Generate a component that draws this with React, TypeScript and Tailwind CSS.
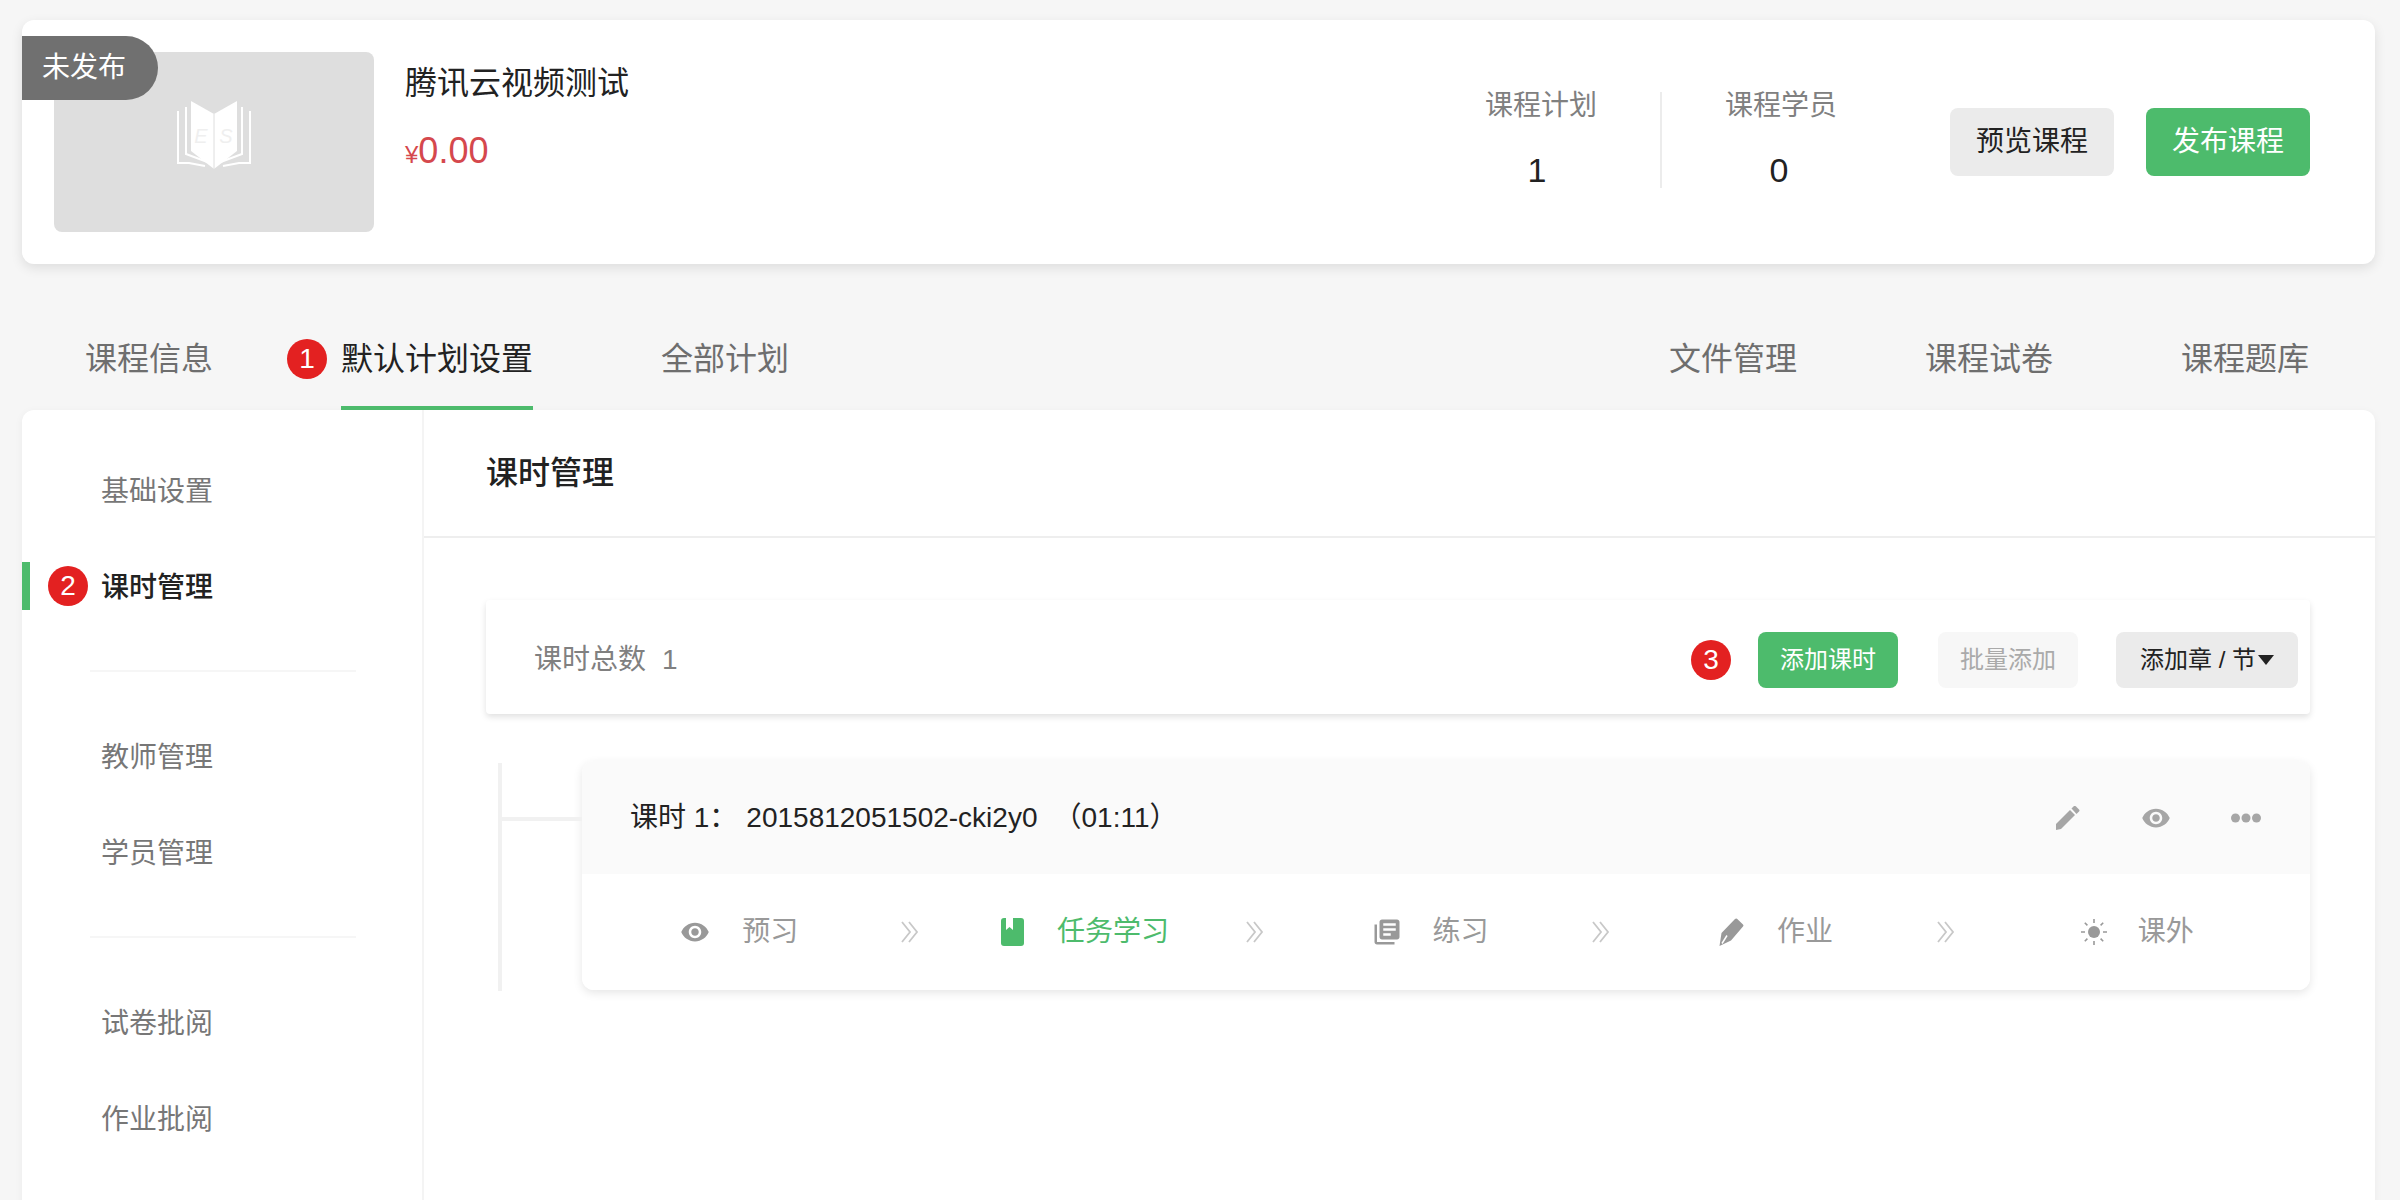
const FONT = "font-['Liberation_Sans','Noto_Sans_CJK_SC',sans-serif]";

function NumberBadge({ value }: { value: number }) {
	return (
		<span className="flex h-10 w-10 shrink-0 items-center justify-center rounded-full bg-[#e32121] text-[28px] leading-none text-white">
			{value}
		</span>
	);
}

function CoverBook() {
	return (
		<svg viewBox="0 0 74 68" className="h-[68px] w-[74px]" fill="none">
			<path d="M37 13 L14 0 V50 L37 68 Z" fill="#fff" />
			<path d="M37 13 L60 0 V50 L37 68 Z" fill="#fff" />
			<path d="M37 13 V68" stroke="#dedede" strokeWidth="1" />
			<path d="M9 6 V53 L33 62" stroke="#fff" strokeWidth="2" />
			<path d="M65 6 V53 L41 62" stroke="#fff" strokeWidth="2" />
			<path d="M1 10 V62 H12 L28 65" stroke="#fff" strokeWidth="2" />
			<path d="M73 10 V62 H62 L46 65" stroke="#fff" strokeWidth="2" />
			<text x="24" y="42" fontSize="20" fill="#efefef" textAnchor="middle" fontStyle="italic">E</text>
			<text x="49" y="42" fontSize="20" fill="#efefef" textAnchor="middle" fontStyle="italic">S</text>
		</svg>
	);
}

function EyeIcon({ className }: { className: string }) {
	return (
		<svg viewBox="0 0 24 24" className={className} fill="currentColor">
			<path d="M12 4.5C7 4.5 2.73 7.61 1 12c1.73 4.39 6 7.5 11 7.5s9.27-3.11 11-7.5c-1.73-4.39-6-7.5-11-7.5zM12 17c-2.76 0-5-2.24-5-5s2.24-5 5-5 5 2.24 5 5-2.24 5-5 5zm0-8c-1.66 0-3 1.34-3 3s1.34 3 3 3 3-1.34 3-3-1.34-3-3-3z" />
		</svg>
	);
}

function SlimPencil() {
	return (
		<svg viewBox="0 0 26 24" className="h-6 w-[26px]" fill="#a6a6a6">
			<path d="M1 18 L15 4 L20 9 L6 23 L1 24 Z" />
			<path d="M16.5 2.5 L19 0 Q20 -0.5 21 0.5 L24 3.5 Q25 4.5 24 5.5 L21.5 8 Z" />
		</svg>
	);
}

function MoreIcon() {
	return (
		<svg viewBox="0 0 30 10" className="h-[10px] w-[30px]" fill="#a6a6a6">
			<circle cx="4.5" cy="5" r="4.5" />
			<circle cx="15" cy="5" r="4.5" />
			<circle cx="25.5" cy="5" r="4.5" />
		</svg>
	);
}

function BookmarkIcon() {
	return (
		<svg viewBox="0 0 23 28" className="h-7 w-[23px]">
			<rect width="23" height="28" rx="3" fill="#4dbb6c" />
			<path d="M5 0 H12 V12 L8.5 9 L5 12 Z" fill="#fff" />
		</svg>
	);
}

function BooksIcon() {
	return (
		<svg viewBox="0 0 24 24" className="h-[30px] w-[30px]" fill="#999">
			<path d="M4 6H2v14c0 1.1.9 2 2 2h14v-2H4V6zm16-4H8c-1.1 0-2 .9-2 2v12c0 1.1.9 2 2 2h12c1.1 0 2-.9 2-2V4c0-1.1-.9-2-2-2zm-1 9H9V9h10v2zm-4 4H9v-2h6v2zm4-8H9V5h10v2z" />
		</svg>
	);
}

function WidePencil() {
	return (
		<svg viewBox="0 0 25 28" className="h-7 w-[25px]" fill="#999">
			<path d="M0.5 28 L2.5 15 L16 1 Q17 0 18 0.8 L24 6.5 Q25 7.5 24 8.5 L12 22.5 Z" />
			<path d="M3 25.5 L8 17.5" stroke="#fff" strokeWidth="1.5" />
		</svg>
	);
}

function SunIcon() {
	return (
		<svg viewBox="0 0 26 26" className="h-[26px] w-[26px]" stroke="#999" strokeWidth="1.6" fill="#999">
			<circle cx="13" cy="13" r="6" stroke="none" />
			<path d="M13 0 V4 M13 22 V26 M0 13 H4 M22 13 H26 M3.8 3.8 L6.4 6.4 M19.6 19.6 L22.2 22.2 M3.8 22.2 L6.4 19.6 M19.6 6.4 L22.2 3.8" />
		</svg>
	);
}

function Chevrons() {
	return (
		<svg viewBox="0 0 20 24" className="h-6 w-5 shrink-0" fill="none" stroke="#c8c8c8" strokeWidth="1.8">
			<path d="M2 2 L10 12 L2 22" />
			<path d="M9 2 L17 12 L9 22" />
		</svg>
	);
}

function Stat({ label, value, digitPad }: { label: string; value: number; digitPad: string }) {
	return (
		<div className="mb-1 flex w-[110px] flex-col items-center">
			<span className="text-[28px] leading-10 whitespace-nowrap text-[#808080]">{label}</span>
			<span className={`mt-6 text-[34px] leading-10 text-[#222] ${digitPad}`}>{value}</span>
		</div>
	);
}

function NavItem({ label }: { label: string }) {
	return (
		<div className="flex h-24 items-center pt-[3px] pl-[79px] text-[28px] text-[#777]">{label}</div>
	);
}

const steps = [
	{ label: "预习", icon: <EyeIcon className="h-[30px] w-[30px] text-[#999]" />, gap: "gap-[32px]" },
	{ label: "任务学习", icon: <BookmarkIcon />, gap: "gap-[33px]", active: true },
	{ label: "练习", icon: <BooksIcon />, gap: "gap-[30px]" },
	{ label: "作业", icon: <WidePencil />, gap: "gap-[33px]" },
	{ label: "课外", icon: <SunIcon />, gap: "gap-[31px]", last: true },
];

export default function App() {
	return (
		<div className={`h-[1200px] w-[2400px] overflow-hidden bg-[#f6f6f6] pt-5 pr-[25px] pl-[22px] ${FONT}`}>
			<section className="relative flex h-[244px] rounded-xl bg-white pt-8 pr-[65px] pl-8 shadow-[0_4px_12px_rgba(0,0,0,0.1)]">
				<span className="absolute top-4 left-0 flex h-16 w-[136px] items-center rounded-r-[32px] bg-[#707070] pl-5 text-[28px] text-white">
					未发布
				</span>
				<div className="flex h-[180px] w-[320px] shrink-0 items-center justify-center rounded-lg bg-[#dedede] pb-[14px]">
					<CoverBook />
				</div>
				<div className="ml-[31px] flex flex-col">
					<h1 className="mt-[9px] text-[32px] leading-[44px] font-normal whitespace-nowrap text-[#222]">
						腾讯云视频测试
					</h1>
					<div className="mt-6 leading-[44px] text-[#d5484d]">
						<span className="text-[24px]">¥</span>
						<span className="text-[36px]">0.00</span>
					</div>
				</div>
				<div className="mt-10 ml-auto flex h-[96px] items-center self-start">
					<Stat label="课程计划" value={1} digitPad="pr-2" />
					<div className="mx-[64px] h-[96px] w-0.5 bg-[#ececec]" />
					<Stat label="课程学员" value={0} digitPad="pr-1" />
					<div className="ml-[114px] flex pt-1">
						<button type="button" className="h-[68px] w-[164px] rounded-lg bg-[#ebebeb] text-[28px] text-[#222]">
							预览课程
						</button>
						<button type="button" className="ml-8 h-[68px] w-[164px] rounded-lg bg-[#4dbb6c] text-[28px] text-white">
							发布课程
						</button>
					</div>
				</div>
			</section>

			<nav className="mt-[44px] flex h-[102px] items-center pr-[66px] pl-[63px] text-[32px] text-[#6e6e6e]">
				<span>课程信息</span>
				<span className="ml-[74px]">
					<NumberBadge value={1} />
				</span>
				<span className="ml-[14px] flex h-[102px] items-center border-b-4 border-[#4dbb6c] pt-1 text-[#222]">
					默认计划设置
				</span>
				<span className="ml-[128px]">全部计划</span>
				<div className="ml-auto flex gap-[128px]">
					<span>文件管理</span>
					<span>课程试卷</span>
					<span>课程题库</span>
				</div>
			</nav>

			<main className="flex h-[800px] rounded-t-xl bg-white shadow-[0_2px_8px_rgba(0,0,0,0.05)]">
				<aside className="w-[402px] shrink-0 border-r-2 border-[#f4f4f4] pt-8">
					<NavItem label="基础设置" />
					<div className="flex h-24 items-center">
						<span className="h-12 w-2 bg-[#4dbb6c]" />
						<span className="ml-[18px]">
							<NumberBadge value={2} />
						</span>
						<span className="mt-[3px] ml-[13px] text-[28px] font-medium text-[#222]">课时管理</span>
					</div>
					<div className="my-9 mr-[66px] ml-[68px] h-0.5 bg-[#f6f6f6]" />
					<NavItem label="教师管理" />
					<NavItem label="学员管理" />
					<div className="my-9 mr-[66px] ml-[68px] h-0.5 bg-[#f6f6f6]" />
					<NavItem label="试卷批阅" />
					<NavItem label="作业批阅" />
				</aside>

				<div className="min-w-0 flex-1">
					<header className="flex h-[128px] items-center border-b-2 border-[#eeeeee] pl-[62px] text-[32px] font-medium text-[#222]">
						课时管理
					</header>
					<div className="pt-[62px] pr-[65px] pl-[62px]">
						<div className="flex h-[114px] items-center rounded-sm pt-[6px] pr-3 pl-12 shadow-[0_3px_6px_rgba(0,0,0,0.12)]">
							<span className="text-[28px] whitespace-nowrap text-[#808080]">
								课时总数
								<span className="ml-4">1</span>
							</span>
							<div className="ml-auto flex items-center">
								<NumberBadge value={3} />
								<button type="button" className="ml-[27px] h-14 w-[140px] rounded-lg bg-[#4dbb6c] text-[24px] text-white">
									添加课时
								</button>
								<button type="button" className="ml-10 h-14 w-[140px] rounded-lg bg-[#f7f7f7] text-[24px] text-[#aaaaaa]">
									批量添加
								</button>
								<button type="button" className="ml-[38px] flex h-14 w-[182px] items-center justify-center gap-0.5 rounded-lg bg-[#ebebeb] text-[24px] whitespace-nowrap text-[#222]">
									添加章 / 节
									<svg viewBox="0 0 16 10" className="h-[10px] w-4" fill="#222">
										<path d="M0 0 H16 L8 10 Z" />
									</svg>
								</button>
							</div>
						</div>

						<div className="relative mt-[47px] ml-24 rounded-xl shadow-[0_3px_10px_rgba(0,0,0,0.1)]">
							<span className="absolute top-0.5 -left-[84px] h-[228px] w-1 bg-[#f1f1f1]" />
							<span className="absolute top-14 -left-[82px] h-1 w-[82px] bg-[#f1f1f1]" />
							<div className="flex h-[113px] items-center rounded-t-xl bg-[#fafafa] pr-[49px] pl-12 text-[28px] whitespace-nowrap text-[#222]">
								<span>课时 1：</span>
								<span className="ml-[9px]">2015812051502-cki2y0</span>
								<span className="ml-4">（01:11）</span>
								<div className="ml-auto flex items-center gap-[60px]">
									<SlimPencil />
									<EyeIcon className="h-[30px] w-[30px] text-[#a6a6a6]" />
									<MoreIcon />
								</div>
							</div>
							<div className="grid h-[116px] grid-cols-5 rounded-b-xl bg-white">
								{steps.map((step) => (
									<div key={step.label} className={`flex items-center ${step.last ? "" : "pr-2"}`}>
										<div className={`flex flex-1 items-center justify-center ${step.gap} ${step.last ? "" : "pr-[3px]"}`}>
											{step.icon}
											<span className={`text-[28px] ${step.active ? "text-[#4dbb6c]" : "text-[#999]"}`}>
												{step.label}
											</span>
										</div>
										{step.last ? null : <Chevrons />}
									</div>
								))}
							</div>
						</div>
					</div>
				</div>
			</main>
		</div>
	);
}
